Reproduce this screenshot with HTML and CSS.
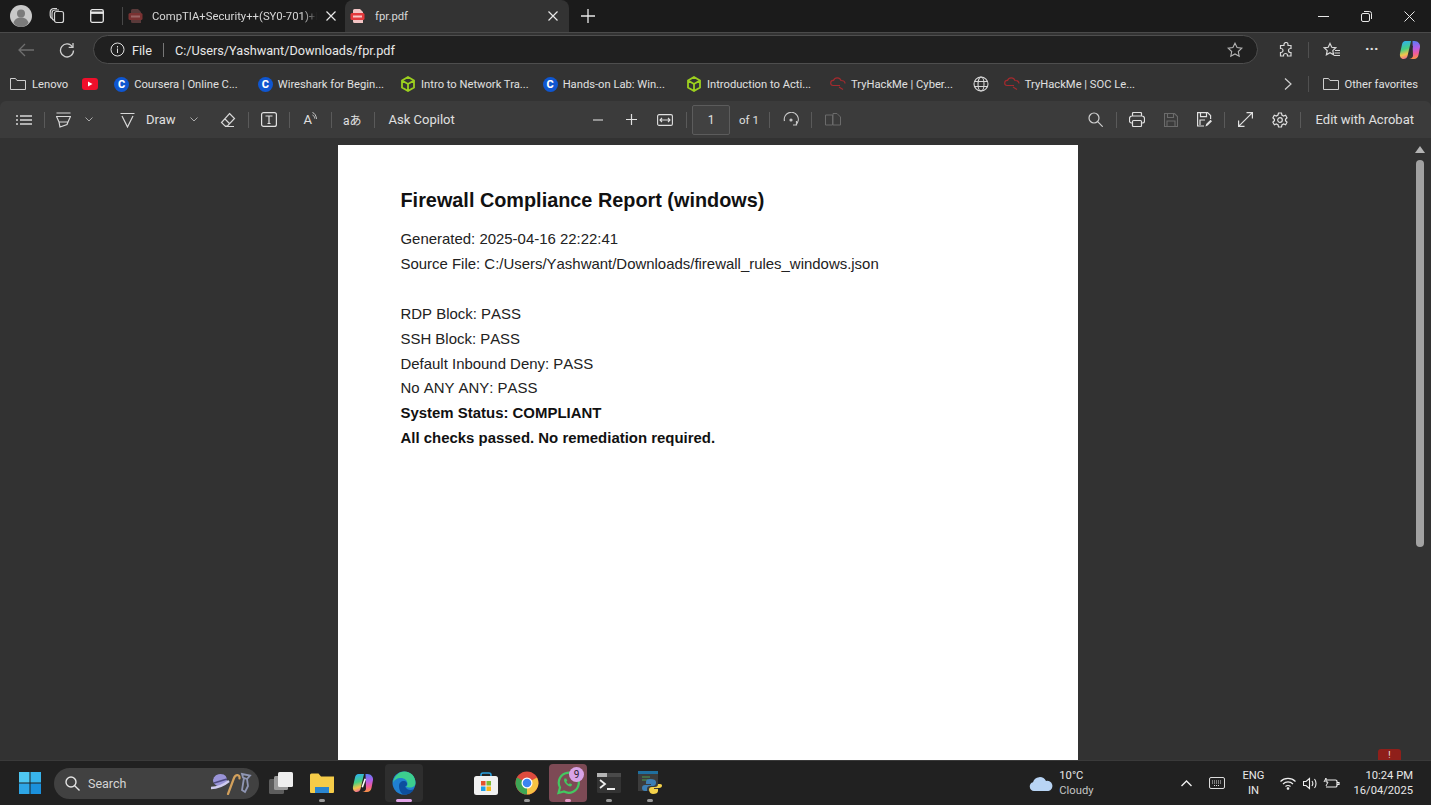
FILE: index.html
```html
<!DOCTYPE html>
<html>

<head>
    <meta charset="UTF-8">
    <meta name="viewport" content="width=device-width, initial-scale=1.0">
    <link rel="stylesheet" href="styles.css">
    <title>fpr.pdf</title>
</head>

<body>

    <!-- tab strip -->
    <div class="tabstrip">
        <div class="avatar">
            <svg width="22" height="22" viewBox="0 0 22 22">
                <circle cx="11" cy="11" r="11" fill="#c9c9c9" />
                <circle cx="11" cy="8.5" r="4" fill="#7b7b7b" />
                <path d="M3.5 18c1-4 4-5.500 7.500-5.500s6.500 1.500 7.500 5.500c-2 2.500-4.500 4-7.500 4s-5.500-1.500-7.500-4z" fill="#7b7b7b" />
            </svg>
        </div>
        <svg class="strip-icon workspaces" width="18" height="18" viewBox="0 0 18 18" fill="none" stroke="#d6d6d6" stroke-width="1.200">
            <rect x="6.500" y="4.500" width="9" height="11" rx="2" />
            <path d="M6.500 13.500c-1.500-.5-2.500-1.500-2.500-3V6c0-1.500 1-3 3-3h4" />
            <path d="M4 11.500c-1-.5-1.800-1.500-1.800-3V5.500C2.200 3 4 1.500 6 1.500h3" />
        </svg>
        <svg class="strip-icon vtabs" width="16" height="16" viewBox="0 0 16 16" fill="none" stroke="#e6e6e6" stroke-width="1.300">
            <rect x="1.700" y="1.700" width="12.600" height="12.600" rx="1.500" />
            <path d="M1.700 4.700h12.600" stroke-width="2.400" />
        </svg>
        <div class="strip-sep"></div>
        <div class="tab first">
            <svg class="pdf-icon" width="15" height="14" viewBox="0 0 15 14">
                <path d="M3 1.500A1.500 1.500 0 0 1 4.500 0H10l3 3v11H4.500A1.500 1.500 0 0 1 3 12.500z" fill="#5a3a3a" />
                <rect x="0.500" y="4" width="14" height="7" rx="1.500" fill="#7a3232" />
                <rect x="3" y="6.500" width="9" height="2" fill="#9a6464" />
            </svg>
            <span class="tab-title fade">CompTIA+Security++(SY0-701)+I</span>
            <svg class="tab-close" width="10" height="10" viewBox="0 0 10 10" stroke="#e8e8e8" stroke-width="1.200"><path d="M.5.5l9 9M9.500.5l-9 9" /></svg>
        </div>
        <div class="tab active">
            <svg class="pdf-icon" width="15" height="14" viewBox="0 0 15 14">
                <path d="M3 1.500A1.500 1.500 0 0 1 4.500 0H10l3 3v11H4.500A1.500 1.500 0 0 1 3 12.500z" fill="#f3c4c4" />
                <rect x="0.500" y="4" width="14" height="7" rx="1.500" fill="#e3393c" />
                <rect x="3" y="6.500" width="9" height="2" fill="#f8c6c6" />
            </svg>
            <span class="tab-title">fpr.pdf</span>
            <svg class="tab-close" width="10" height="10" viewBox="0 0 10 10" stroke="#e8e8e8" stroke-width="1.200"><path d="M.5.5l9 9M9.500.5l-9 9" /></svg>
        </div>
        <svg class="new-tab" width="14" height="14" viewBox="0 0 14 14" stroke="#e8e8e8" stroke-width="1.300">
            <path d="M7 0v14M0 7h14" />
        </svg>
        <div class="window-btns">
            <svg width="11" height="11" viewBox="0 0 11 11" stroke="#e8e8e8" fill="none"><path d="M0 5.500h11" /></svg>
            <svg width="11" height="11" viewBox="0 0 11 11" stroke="#e8e8e8" fill="none"><rect x="0.500" y="2.500" width="8" height="8" rx="1.500" /><path d="M3 .5h5.500a2 2 0 0 1 2 2V8" /></svg>
            <svg width="11" height="11" viewBox="0 0 11 11" stroke="#e8e8e8" fill="none"><path d="M.5.5l10 10M10.500.5l-10 10" /></svg>
        </div>
    </div>

    <!-- address row -->
    <div class="navbar">
        <svg class="nav-back" width="16" height="14" viewBox="0 0 16 14" fill="none" stroke="#6f6f6f" stroke-width="1.300">
            <path d="M16 7H1M7 1L1 7l6 6" />
        </svg>
        <svg class="nav-reload" width="16" height="16" viewBox="0 0 16 16" fill="none" stroke="#cfcfcf" stroke-width="1.300">
            <path d="M13.500 5A6.500 6.500 0 1 0 14.500 8.500" />
            <path d="M14 1v4.300H9.700" />
        </svg>
        <div class="address">
            <svg width="15" height="15" viewBox="0 0 15 15" fill="none" stroke="#e0e0e0">
                <circle cx="7.500" cy="7.500" r="6.500" />
                <path d="M7.500 6.500v4.500M7.500 4v1.500" />
            </svg>
            <span class="addr-file">File</span>
            <span class="addr-sep"></span>
            <span class="addr-url">C:/Users/Yashwant/Downloads/fpr.pdf</span>
            <svg class="addr-star" width="16" height="16" viewBox="0 0 16 16" fill="none" stroke="#b5b5b5" stroke-width="1.100">
                <path d="M8 1.200l2.100 4.400 4.700.6-3.500 3.300.9 4.800L8 11.900l-4.200 2.400.9-4.800L1.200 6.200l4.700-.6z" />
            </svg>
        </div>
        <div class="nav-tools">
            <svg class="tool-ext" width="16" height="16" viewBox="0 0 16 16" fill="none" stroke="#d8d8d8" stroke-width="1.200">
                <path d="M6 2.500a2 2 0 0 1 4 0V3.500h3v3h-.5a2 2 0 0 0 0 4h.5V14h-3.500v-.5a2 2 0 0 0-4 0v.5H2.500v-3.500H3a2 2 0 0 0 0-4h-.5V3.500H6z" />
            </svg>
            <span class="tool-sep"></span>
            <svg class="tool-favs" width="18" height="16" viewBox="0 0 18 16" fill="none" stroke="#d8d8d8" stroke-width="1.200">
                <path d="M7 1.500l1.800 3.800 4 .5-3 2.800.8 4.200L7 10.800l-3.600 2 .8-4.200-3-2.800 4-.5zM12 8.500h5M11.500 11h5.500M11 13.500h6" />
            </svg>
            <span class="tool-dots">···</span>
            <svg class="tool-copilot" width="22" height="22" viewBox="0 0 22 22">
                <defs>
                    <linearGradient id="cpa" x1="0.300" y1="0" x2="0.500" y2="1">
                        <stop offset="0" stop-color="#2fb0f2" />
                        <stop offset="0.450" stop-color="#45cf82" />
                        <stop offset="0.750" stop-color="#f3c44a" />
                        <stop offset="1" stop-color="#f0649a" />
                    </linearGradient>
                    <linearGradient id="cpb" x1="0.500" y1="0" x2="0.600" y2="1">
                        <stop offset="0" stop-color="#5a7cf6" />
                        <stop offset="0.400" stop-color="#b45ee6" />
                        <stop offset="0.700" stop-color="#f25c98" />
                        <stop offset="1" stop-color="#f8983c" />
                    </linearGradient>
                </defs>
                <path d="M6.500 2H12L8.500 17c-.5 2-2 3-4 3C2 20 .5 17.500 1 14.500L3 5.500C3.400 3.300 4.700 2 6.500 2z" fill="url(#cpa)" />
                <path d="M13.500 2h2c3.500 0 6 3 5.500 6l-1.500 8c-.5 2.500-2.300 4-4.500 4H10c2 0 3.500-1 4-3z" fill="url(#cpb)" />
                <path d="M12.500 6.500l1.500.5-3 8.500-1.500-.5z" fill="#2c2c34" />
            </svg>
        </div>
    </div>

    <!-- favorites -->
    <div class="favbar">
        <div class="fav">
            <svg width="16" height="14" viewBox="0 0 16 14" fill="none" stroke="#cfcfcf"><path d="M.5 12.500V1.500h5l1.500 2h8.500v9z" /></svg>
            <span class="fav-lenovo">Lenovo</span>
        </div>
        <div class="fav m14">
            <svg width="16" height="12" viewBox="0 0 16 12"><rect width="16" height="12" rx="3" fill="#f00f2b" /><path d="M6 3.500l4.500 2.500L6 8.500z" fill="#fff" /></svg>
        </div>
        <div class="fav m16"><span class="coursera">C</span><span>Coursera | Online C...</span></div>
        <div class="fav m20"><span class="coursera">C</span><span>Wireshark for Begin...</span></div>
        <div class="fav m16">
            <svg width="16" height="16" viewBox="0 0 16 16" fill="none" stroke="#9ccf1f" stroke-width="1.800"><path d="M8 1l6 3.500v7L8 15l-6-3.500v-7zM2 4.500L8 8l6-3.500M8 8v7" /></svg>
            <span>Intro to Network Tra...</span>
        </div>
        <div class="fav m14"><span class="coursera">C</span><span>Hands-on Lab: Win...</span></div>
        <div class="fav m21">
            <svg width="16" height="16" viewBox="0 0 16 16" fill="none" stroke="#9ccf1f" stroke-width="1.800"><path d="M8 1l6 3.500v7L8 15l-6-3.500v-7zM2 4.500L8 8l6-3.500M8 8v7" /></svg>
            <span>Introduction to Acti...</span>
        </div>
        <div class="fav m19">
            <svg width="16" height="14" viewBox="0 0 16 14" fill="none" stroke="#a42a2e" stroke-width="1.200"><path d="M3 8.500a2.500 2.500 0 0 1 .5-5 4 4 0 0 1 7.500 0c2.500 0 4 1.500 4 3M3 8.500h7M9 10l4 2.500" /></svg>
            <span>TryHackMe | Cyber...</span>
        </div>
        <div class="fav m20">
            <svg width="16" height="16" viewBox="0 0 16 16" fill="none" stroke="#d8d8d8" stroke-width="1.100"><circle cx="8" cy="8" r="7" /><ellipse cx="8" cy="8" rx="3" ry="7" /><path d="M1.500 5.500h13M1.500 10.500h13" /></svg>
        </div>
        <div class="fav m15">
            <svg width="16" height="14" viewBox="0 0 16 14" fill="none" stroke="#a42a2e" stroke-width="1.200"><path d="M3 8.500a2.500 2.500 0 0 1 .5-5 4 4 0 0 1 7.500 0c2.500 0 4 1.500 4 3M3 8.500h7M9 10l4 2.500" /></svg>
            <span>TryHackMe | SOC Le...</span>
        </div>
        <div class="fav-end">
            <svg width="8" height="12" viewBox="0 0 8 12" fill="none" stroke="#d0d0d0" stroke-width="1.200"><path d="M1 .5L7 6l-6 5.500" /></svg>
            <span class="tool-sep"></span>
            <div class="fav">
                <svg width="16" height="14" viewBox="0 0 16 14" fill="none" stroke="#cfcfcf"><path d="M.5 12.500V1.500h5l1.500 2h8.500v9z" /></svg>
                <span>Other favorites</span>
            </div>
        </div>
    </div>

    <!-- pdf toolbar -->
    <div class="pdfbar">
        <div class="pdf-left">
            <svg class="ico-contents" width="16" height="12" viewBox="0 0 16 12" stroke="#d8d8d8" stroke-width="1.300"><path d="M0 2h2M4 2h12M0 6h2M4 6h12M0 10h2M4 10h12" /></svg>
            <span class="bar-sep"></span>
            <svg class="ico-hl" width="15" height="16" viewBox="0 0 15 16" fill="none" stroke="#d8d8d8" stroke-width="1.200"><path d="M.5 1h14M.5 4.500h14L12 10H3zM3 10l1 5 7-2.500L12 10" /></svg>
            <svg class="chev" width="8" height="5" viewBox="0 0 8 5" fill="none" stroke="#aaa"><path d="M.5.5L4 4 7.500.5" /></svg>
            <svg class="ico-draw" width="15" height="16" viewBox="0 0 15 16" fill="none" stroke="#d8d8d8" stroke-width="1.200"><path d="M.5 1.500h14M2 4l5.500 11L13 4" /></svg>
            <span class="bar-text draw">Draw</span>
            <svg class="chev chev-draw" width="8" height="5" viewBox="0 0 8 5" fill="none" stroke="#aaa"><path d="M.5.5L4 4 7.500.5" /></svg>
            <svg class="ico-erase" width="16" height="16" viewBox="0 0 16 16" fill="none" stroke="#d8d8d8" stroke-width="1.200"><path d="M9.500 1.500l5 5-7 7.500H5L1.500 10.500zM4.500 6.500l5 5M5 14.500h9" /></svg>
            <span class="bar-sep"></span>
            <svg class="ico-text" width="16" height="15" viewBox="0 0 16 15" fill="none" stroke="#e0e0e0" stroke-width="1.200"><rect x=".6" y=".6" width="14.800" height="13.800" rx="2" /><path d="M4.500 4h7M8 4v7.500M6.500 11.500h3" /></svg>
            <span class="bar-sep"></span>
            <span class="bar-text read">A</span>
            <svg class="ico-waves" width="6" height="8" viewBox="0 0 6 8" fill="none" stroke="#c8c8c8"><path d="M.5.500C3 1.500 4 3.500 4.500 7M.5 3c1.500.5 2 2 2.200 3.500" /></svg>
            <span class="bar-sep"></span>
            <span class="bar-text trans">aあ</span>
            <span class="bar-sep"></span>
            <span class="bar-text copilot">Ask Copilot</span>
        </div>
        <div class="pdf-center">
            <svg width="10" height="10" viewBox="0 0 10 10" stroke="#cfcfcf" stroke-width="1.200"><path d="M0 5h10" /></svg>
            <svg class="ico-plus" width="11" height="11" viewBox="0 0 11 11" stroke="#e0e0e0" stroke-width="1.200"><path d="M0 5.500h11M5.500 0v11" /></svg>
            <svg class="ico-fit" width="16" height="12" viewBox="0 0 16 12" fill="none" stroke="#e0e0e0" stroke-width="1.100"><rect x=".6" y=".6" width="14.800" height="10.800" rx="1.500" /><path d="M3 6h10M5 4L3 6l2 2M11 4l2 2-2 2" /></svg>
            <span class="bar-sep"></span>
            <span class="page-box">1</span>
            <span class="bar-text page-of">of 1</span>
            <span class="bar-sep"></span>
            <svg class="ico-rotate" width="16" height="16" viewBox="0 0 16 16" fill="none" stroke="#c8c8c8" stroke-width="1.200"><path d="M1.500 9A7 7 0 1 1 13 12.500M13.500 9v4H10" /><circle cx="8" cy="8" r="1" fill="#c8c8c8" /></svg>
            <span class="bar-sep"></span>
            <svg class="ico-spread" width="16" height="13" viewBox="0 0 16 13" fill="none" stroke="#6b6b6b"><path d="M.5 2h7v10h-7zM8 12V.5l4 0 3.500 3.500V12H8" /></svg>
        </div>
        <div class="pdf-right">
            <svg width="15" height="15" viewBox="0 0 15 15" fill="none" stroke="#d0d0d0" stroke-width="1.200"><circle cx="6" cy="6" r="5" /><path d="M9.700 9.700l5 5" /></svg>
            <span class="bar-sep"></span>
            <svg class="ico-print" width="16" height="15" viewBox="0 0 16 15" fill="none" stroke="#e0e0e0" stroke-width="1.200"><path d="M3.500 4V1.500a1 1 0 0 1 1-1h7a1 1 0 0 1 1 1V4M3.500 11h-1a2 2 0 0 1-2-2V6.500a2.500 2.500 0 0 1 2.500-2.500h10a2.500 2.500 0 0 1 2.500 2.500V9a2 2 0 0 1-2 2h-1" /><rect x="3.500" y="8.500" width="9" height="6" rx="1" /></svg>
            <svg class="ico-save" width="14" height="14" viewBox="0 0 14 14" fill="none" stroke="#6b6b6b" stroke-width="1.100"><path d="M.5.500h10l3 3v10H.5zM3.500.5v4h6v-4M3 13.500V8h8v5.500" /></svg>
            <svg class="ico-saveas" width="15" height="15" viewBox="0 0 15 15" fill="none" stroke="#e0e0e0" stroke-width="1.200"><path d="M7 14H.6V.6h10l3 3V7M3.500.6v4h6v-4M3 13V8h5" /><path d="M8.500 14.500l.7-2.500 4.300-4.300 1.500 1.500-4.300 4.300z" fill="#e0e0e0" stroke="none" /></svg>
            <span class="bar-sep"></span>
            <svg class="ico-expand" width="15" height="15" viewBox="0 0 15 15" fill="none" stroke="#e0e0e0" stroke-width="1.200"><path d="M.6 14.400L14.400.6M.6 8.500v5.900h5.900M8.500.6h5.900v5.900" /></svg>
            <svg class="ico-gear" width="16" height="16" viewBox="0 0 16 16" fill="none" stroke="#e0e0e0" stroke-width="1.200"><circle cx="8" cy="8" r="2.300" /><path d="M6.500 1h3l.4 2 1.700 1 2-.7 1.400 2.500-1.500 1.400v1.600l1.500 1.400-1.400 2.500-2-.7-1.700 1-.4 2h-3l-.4-2-1.700-1-2 .7L.9 10.200l1.500-1.400V7.200L.9 5.800l1.400-2.500 2 .7 1.700-1z" /></svg>
            <span class="bar-sep"></span>
            <span class="bar-text acrobat">Edit with Acrobat</span>
        </div>
    </div>

    <!-- document area -->
    <div class="viewer">
        <div class="page">
            <h1>Firewall Compliance Report (windows)</h1>
            <p>Generated: 2025-04-16 22:22:41</p>
            <p class="gap-after">Source File: C:/Users/Yashwant/Downloads/firewall_rules_windows.json</p>
            <p>RDP Block: PASS</p>
            <p>SSH Block: PASS</p>
            <p>Default Inbound Deny: PASS</p>
            <p>No ANY ANY: PASS</p>
            <p class="strong">System Status: COMPLIANT</p>
            <p class="strong">All checks passed. No remediation required.</p>
        </div>
        <div class="scrollbar">
            <span class="sb-up"></span>
            <span class="sb-thumb"></span>
        </div>
        <div class="red-badge">!</div>
    </div>

    <!-- windows taskbar -->
    <div class="taskbar">
        <svg class="win-logo" width="22" height="22" viewBox="0 0 22 22">
            <rect width="10.500" height="10.500" fill="#4fc8f2" />
            <rect x="11.500" width="10.500" height="10.500" fill="#38b4ec" />
            <rect y="11.500" width="10.500" height="10.500" fill="#2ea6e6" />
            <rect x="11.500" y="11.500" width="10.500" height="10.500" fill="#1b90dc" />
        </svg>
        <div class="search">
            <svg width="15" height="15" viewBox="0 0 15 15" fill="none" stroke="#e4e4e4" stroke-width="1.400"><circle cx="6" cy="6" r="5" /><path d="M9.700 9.700l4.800 4.800" /></svg>
            <span>Search</span>
            <svg class="search-art" width="42" height="24" viewBox="0 0 42 24" fill="none">
                <ellipse cx="10" cy="9" rx="7" ry="6" fill="#9a94d8" transform="rotate(-15 10 9)" />
                <path d="M1 17c6 0 13-3 18-7" stroke="#cfcbee" stroke-width="2.400" />
                <path d="M4 12l13-4" stroke="#4d4a80" stroke-width="1.500" />
                <path d="M18 23l6-16c1.500-4 6-4 5.500.5" stroke="#d2a05c" stroke-width="2.200" stroke-linecap="round" />
                <path d="M32 3l8 1.500-3 3.500-4-1.500zM34 7l-1 6-1 6 3 2 3-6-1-7" stroke="#8f96b3" stroke-width="1.800" />
            </svg>
        </div>
        <div class="task-icons">
            <div class="task-item">
                <svg width="24" height="22" viewBox="0 0 24 22"><rect y="7" width="15" height="15" rx="1.500" fill="#5d5d5d" /><rect x="5" y="4" width="14" height="14" rx="1.500" fill="#9a9a9a" /><rect x="9" width="15" height="15" rx="1.500" fill="#eeeeee" /></svg>
            </div>
            <div class="task-item open">
                <svg width="24" height="20" viewBox="0 0 24 20"><path d="M0 2a1.500 1.500 0 0 1 1.500-1.500h7l2.500 3h13V19a1 1 0 0 1-1 1H1a1 1 0 0 1-1-1z" fill="#f6cc48" /><rect x="5" y="14" width="14" height="6" fill="#2a86d0" /></svg>
            </div>
            <div class="task-item">
                <svg width="22" height="22" viewBox="0 0 22 22">
                    <path d="M6.500 2H12L8.500 17c-.5 2-2 3-4 3C2 20 .5 17.500 1 14.500L3 5.500C3.400 3.300 4.700 2 6.500 2z" fill="url(#cpa)" />
                    <path d="M13.500 2h2c3.500 0 6 3 5.500 6l-1.500 8c-.5 2.500-2.300 4-4.500 4H10c2 0 3.500-1 4-3z" fill="url(#cpb)" />
                    <path d="M12.500 6.500l1.500.5-3 8.500-1.500-.5z" fill="#fff" />
                </svg>
            </div>
            <div class="task-item running">
                <svg width="24" height="24" viewBox="0 0 24 24">
                    <circle cx="12" cy="12" r="11.500" fill="#1f7fd0" />
                    <path d="M1 12C2 5 7 .5 12.500.5 19 .5 23.500 5.500 23.500 12c0 3-2.500 4.500-5.500 4.500-2 0-3.500-.5-4-1 1-.5 1.500-1.500 1.500-2.500C15.500 9 12 7 9 7c-4 0-7 2-8 5z" fill="#3ccf8e" />
                    <path d="M7 15c0-3 2-5 5-5 2 0 3 1.500 3 3s-1 2.500-2 2.500c2 4 6 4 9 2.500-2 4-6 6-10 5.500C9 23 7 19 7 15z" fill="#0d4f9e" />
                </svg>
            </div>
            <div class="task-spacer"></div>
            <div class="task-item">
                <svg width="24" height="23" viewBox="0 0 24 23"><path d="M7 5V3a2 2 0 0 1 2-2h6a2 2 0 0 1 2 2v2" fill="none" stroke="#29a0e0" stroke-width="1.500" /><rect y="4" width="24" height="19" rx="2.500" fill="#f1f1f1" /><rect x="7" y="9" width="4.500" height="4.500" fill="#e5512d" /><rect x="12.500" y="9" width="4.500" height="4.500" fill="#7cbb35" /><rect x="7" y="14.500" width="4.500" height="4.500" fill="#1f9fe8" /><rect x="12.500" y="14.500" width="4.500" height="4.500" fill="#f7b818" /></svg>
            </div>
            <div class="task-item open">
                <svg width="24" height="24" viewBox="0 0 24 24">
                    <circle cx="12" cy="12" r="11.500" fill="#dd4b3e" />
                    <path d="M12 12L22 6.500A11.500 11.500 0 0 1 12 23.500z" fill="#f6c243" />
                    <path d="M12 12L12 23.500A11.500 11.500 0 0 1 2 6.500z" fill="#3ea655" />
                    <circle cx="12" cy="12" r="5.500" fill="#fff" />
                    <circle cx="12" cy="12" r="4.300" fill="#3b84f2" />
                </svg>
            </div>
            <div class="task-item wa open-pink">
                <svg width="24" height="24" viewBox="0 0 24 24" fill="none" stroke="#43c860" stroke-width="2.200">
                    <path d="M2.500 22l1.500-5.500A10 10 0 1 1 8 20.500z" />
                    <path d="M8.500 7.500c-1 1.500-.5 3.500 1.500 5.500s4 3 5.500 2l.5-1.800-2.200-1-1 1c-1-.5-2-1.500-2.500-2.500l1-1-1-2.200z" fill="#43c860" stroke="none" />
                </svg>
                <span class="wa-badge">9</span>
            </div>
            <div class="task-item open">
                <svg width="24" height="20" viewBox="0 0 24 20"><rect width="24" height="20" rx="1.500" fill="#333" /><rect width="24" height="4" fill="#4a4a4a" /><rect width="10" height="4" fill="#b5b5b5" /><path d="M3 7l5 4-5 4" fill="none" stroke="#eee" stroke-width="1.800" /><path d="M10 16h8" stroke="#eee" stroke-width="2" /></svg>
            </div>
            <div class="task-item open">
                <svg width="24" height="24" viewBox="0 0 24 24">
                    <rect y="0" width="20" height="20" fill="#3c3c3c" />
                    <rect y="0" width="20" height="3" fill="#1f6f9e" />
                    <path d="M4 6h8M4 9h6" stroke="#4f9e4f" />
                    <path d="M12 8c-3 0-4 1-4 3v2h5v1H7c-2 0-3 1-3 3s1 3 3 3h2v-2c0-2 1-3 3-3h3c1.500 0 3-1 3-3v-1c0-2-2-3-6-3z" fill="#3d7fb5" />
                    <path d="M20 13c0 2-1 3-3 3h-3c-2 0-3 1-3 2.500S12 23 15 23s5-1 5-3v-2h-4v-1h5c2 0 3-1 3-2.500S23 13 20 13z" fill="#f5d24a" />
                </svg>
            </div>
        </div>
        <div class="tray">
            <div class="weather">
                <svg width="24" height="15" viewBox="0 0 24 15"><path d="M5 15a4.500 4.500 0 0 1-1-8.800A7 7 0 0 1 17 5a5 5 0 0 1 2.500 10z" fill="#b8d4f4" /></svg>
                <div class="weather-text">
                    <span class="temp">10°C</span>
                    <span class="sky">Cloudy</span>
                </div>
            </div>
            <svg class="tray-chevron" width="11" height="7" viewBox="0 0 11 7" fill="none" stroke="#eee" stroke-width="1.400"><path d="M.5 6l5-5 5 5" /></svg>
            <svg class="tray-keys" width="16" height="12" viewBox="0 0 16 12" fill="none" stroke="#ddd"><rect x=".5" y=".5" width="15" height="11" rx="1.500" /><path d="M3 4h10M3 6h10M5 8.500h6" stroke-dasharray="1 1" /></svg>
            <div class="lang"><span>ENG</span><span>IN</span></div>
            <div class="tray-status">
                <svg width="16" height="13" viewBox="0 0 16 13" fill="none" stroke="#eee" stroke-width="1.100"><path d="M.5 4.500a10.500 10.500 0 0 1 15 0M3 7a7 7 0 0 1 10 0M5.500 9.500a3.500 3.500 0 0 1 5 0" /><circle cx="8" cy="11.500" r=".8" fill="#eee" /></svg>
                <svg class="tray-vol" width="15" height="13" viewBox="0 0 15 13" fill="none" stroke="#eee" stroke-width="1.100"><path d="M.5 4.500h2.500L6.500 1.500v10L3 8.500H.5zM9 4c1 1.500 1 3.500 0 5M11.500 2c2 2.500 2 6.500 0 9" /></svg>
                <svg class="tray-batt" width="17" height="13" viewBox="0 0 17 13" fill="none" stroke="#eee" stroke-width="1.200"><path d="M3 3h9.500a1.500 1.500 0 0 1 1.500 1.500v4a1.500 1.500 0 0 1-1.500 1.500H3M14 5.500h2v2h-2" /><path d="M1 5l2-4v4h2L3 9" stroke-width="1" /></svg>
            </div>
            <div class="clock"><span>10:24 PM</span><span>16/04/2025</span></div>
        </div>
    </div>

</body>

</html>
```

FILE: styles.css
```css
* {
    box-sizing: border-box;
}

html,
body {
    margin: 0;
    padding: 0;
    height: 100%;
    overflow: hidden;
}

body {
    width: 1431px;
    height: 805px;
    display: flex;
    flex-direction: column;
    background-color: #333;
    font-family: Roboto, "Noto Sans", sans-serif;
    color: #e4e4e4;
}

svg {
    flex: none;
    display: block;
}

/* tab strip */
.tabstrip {
    height: 32px;
    flex: none;
    display: flex;
    align-items: center;
    background-color: #1b1b1b;
    padding-left: 10px;
}

.avatar {
    width: 22px;
    height: 22px;
}

.workspaces {
    margin-left: 16px;
}

.vtabs {
    margin-left: 23px;
}

.strip-sep {
    width: 1px;
    height: 18px;
    background-color: #484848;
    margin-left: 17px;
}

.tab {
    width: 222px;
    height: 32px;
    display: flex;
    align-items: center;
    padding-left: 5px;
    position: relative;
    font-size: 11.300px;
    color: #d8d8d8;
}

.tab.active {
    width: 224px;
    background-color: #333;
    border-radius: 8px 8px 0 0;
}

.tab-title {
    margin-left: 9px;
    width: 172px;
    white-space: nowrap;
}

.tab-title.fade {
    -webkit-mask-image: linear-gradient(to right, #000 88%, transparent 96%);
    mask-image: linear-gradient(to right, #000 88%, transparent 96%);
}

.tab.active .tab-title {
    margin-left: 10px;
}

.tab-close {
    position: absolute;
    right: 11px;
    top: 11px;
}

.tab.first .tab-close {
    right: 9px;
}

.new-tab {
    margin-left: 12px;
}

.window-btns {
    margin-left: auto;
    display: flex;
    gap: 32px;
    padding-right: 16px;
}

/* address row */
.navbar {
    height: 34px;
    flex: none;
    display: flex;
    align-items: center;
    background-color: #333;
    border-top: 1px solid #4a4a4a;
    padding-left: 18px;
}

.nav-reload {
    margin-left: 25px;
}

.address {
    width: 1165px;
    height: 29px;
    margin-left: 18px;
    display: flex;
    align-items: center;
    background-color: #202020;
    border: 1px solid #4e4e4e;
    border-radius: 15px;
    padding-left: 16px;
    font-size: 12.700px;
}

.addr-file {
    margin-left: 7px;
    padding-top: 1px;
    color: #e8e8e8;
}

.addr-sep {
    width: 1px;
    height: 14px;
    background-color: #777;
    margin-left: 11px;
}

.addr-url {
    margin-left: 11px;
    padding-top: 1px;
    color: #e8e8e8;
}

.addr-star {
    margin-left: auto;
    margin-right: 14px;
}

.nav-tools {
    display: flex;
    align-items: center;
}

.tool-ext {
    margin-left: 20px;
}

.tool-sep {
    width: 1px;
    height: 16px;
    background-color: #505050;
    margin-left: 14px;
}

.tool-favs {
    margin-left: 14px;
}

.tool-dots {
    margin-left: 24px;
    font-size: 15px;
    font-weight: 700;
    line-height: 1;
    color: #e0e0e0;
}

.tool-copilot {
    margin-left: 20px;
}

/* favorites */
.favbar {
    height: 35px;
    flex: none;
    display: flex;
    align-items: center;
    background-color: #333;
    padding-top: 1px;
    padding-left: 10px;
    font-size: 11.200px;
    color: #e0e0e0;
}

.fav {
    display: flex;
    align-items: center;
    gap: 5px;
    white-space: nowrap;
}

.fav-lenovo {
    margin-left: 1px;
}

.m14 {
    margin-left: 14px;
}

.m15 {
    margin-left: 15px;
}

.m16 {
    margin-left: 16px;
}

.m19 {
    margin-left: 19px;
}

.m20 {
    margin-left: 20px;
}

.m21 {
    margin-left: 21px;
}

.coursera {
    width: 15px;
    height: 15px;
    border-radius: 50%;
    background-color: #0f56d0;
    color: #fff;
    font-size: 11px;
    font-weight: 800;
    text-align: center;
    line-height: 15px;
}

.fav-end {
    margin-left: auto;
    display: flex;
    align-items: center;
    padding-right: 13px;
}

.fav-end .fav {
    margin-left: 14px;
}

.fav-end .tool-sep {
    margin-left: 16px;
}

/* pdf toolbar */
.pdfbar {
    height: 37px;
    flex: none;
    display: flex;
    align-items: center;
    position: relative;
    background-color: #3b3b3b;
    border-radius: 6px 6px 0 0;
    padding-left: 16px;
    font-size: 13px;
    color: #e0e0e0;
}

.pdf-left,
.pdf-center,
.pdf-right {
    display: flex;
    align-items: center;
}

.bar-sep {
    width: 1px;
    height: 16px;
    background-color: #5a5a5a;
}

.bar-text {
    white-space: nowrap;
}

.pdf-left .bar-sep:nth-of-type(1) {
    margin-left: 12px;
}

.ico-hl {
    margin-left: 11px;
}

.chev {
    margin-left: 14px;
}

.ico-draw {
    margin-left: 27px;
}

.draw {
    margin-left: 11px;
}

.chev-draw {
    margin-left: 14px;
}

.ico-erase {
    margin-left: 22px;
}

.ico-erase + .bar-sep {
    margin-left: 12px;
}

.ico-text {
    margin-left: 12px;
}

.ico-text + .bar-sep {
    margin-left: 12px;
}

.read {
    margin-left: 14px;
}

.ico-waves {
    margin-bottom: 8px;
}

.ico-waves + .bar-sep {
    margin-left: 13px;
}

.trans {
    margin-left: 11px;
    font-family: Roboto, "Noto Sans CJK JP", sans-serif;
    font-size: 12px;
}

.trans + .bar-sep {
    margin-left: 12px;
}

.copilot {
    margin-left: 14px;
}

.pdf-center {
    position: absolute;
    left: 593px;
}

.ico-plus {
    margin-left: 23px;
}

.ico-fit {
    margin-left: 20px;
}

.ico-fit + .bar-sep {
    margin-left: 13px;
}

.page-box {
    width: 38px;
    height: 30px;
    margin-left: 5px;
    border: 1px solid #5c5c5c;
    background-color: #414141;
    border-radius: 2px;
    text-align: center;
    line-height: 28px;
    font-size: 12px;
}

.page-of {
    margin-left: 9px;
    font-size: 11.500px;
}

.page-of + .bar-sep {
    margin-left: 10px;
}

.ico-rotate {
    margin-left: 13px;
}

.ico-rotate + .bar-sep {
    margin-left: 12px;
}

.ico-spread {
    margin-left: 13px;
}

.pdf-right {
    margin-left: auto;
    padding-right: 17px;
}

.pdf-right .bar-sep:nth-of-type(1) {
    margin-left: 13px;
}

.ico-print {
    margin-left: 12px;
}

.ico-save {
    margin-left: 19px;
}

.ico-saveas {
    margin-left: 19px;
}

.ico-saveas + .bar-sep {
    margin-left: 12px;
}

.ico-expand {
    margin-left: 13px;
}

.ico-gear {
    margin-left: 19px;
}

.ico-gear + .bar-sep {
    margin-left: 12px;
}

.acrobat {
    margin-left: 15px;
}

/* document area */
.viewer {
    flex: 1;
    min-height: 0;
    position: relative;
    display: flex;
    justify-content: center;
    background-color: #323232;
    padding-top: 7px;
    overflow: hidden;
}

.page {
    width: 740px;
    background-color: #fff;
    padding: 43px 62.500px 0;
    margin-right: 15px;
    color: #222;
    font-family: "Liberation Sans", Arial, sans-serif;
    font-size: 14.940px;
    font-kerning: none;
}

.page h1 {
    margin: 0 0 15px;
    font-size: 19.850px;
    line-height: 24px;
    font-weight: 700;
    color: #111;
}

.page p {
    margin: 0;
    line-height: 24.900px;
}

.page .gap-after {
    margin-bottom: 24.900px;
}

.page .strong {
    font-weight: 700;
    color: #111;
}

.scrollbar {
    position: absolute;
    top: 0;
    right: 0;
    width: 22px;
    height: 100%;
}

.sb-up {
    position: absolute;
    top: 8px;
    left: 6px;
    width: 0;
    height: 0;
    border-left: 5px solid transparent;
    border-right: 5px solid transparent;
    border-bottom: 7px solid #b4b4b4;
}

.sb-thumb {
    position: absolute;
    top: 22px;
    left: 7px;
    width: 8px;
    height: 387px;
    border-radius: 4px;
    background-color: #a2a2a2;
}

.red-badge {
    position: absolute;
    bottom: 0;
    left: 1378px;
    width: 23px;
    height: 11px;
    background-color: #8f1f1a;
    border-radius: 3px 3px 0 0;
    color: #eee;
    font-size: 9px;
    line-height: 12px;
    text-align: center;
}

/* windows taskbar */
.taskbar {
    height: 45px;
    flex: none;
    display: flex;
    align-items: center;
    background-color: #212121;
    border-top: 1px solid #3a3a3a;
    padding-left: 19px;
}

.search {
    width: 205px;
    height: 31px;
    margin-left: 13px;
    display: flex;
    align-items: center;
    border-radius: 16px;
    background-color: #414141;
    padding-left: 11px;
    font-size: 12.500px;
    color: #d4d4d4;
}

.search span {
    margin-left: 8px;
}

.search-art {
    margin-left: auto;
    margin-right: 7px;
}

.task-icons {
    display: flex;
    align-items: center;
    margin-left: 3px;
}

.task-item {
    width: 38px;
    height: 38px;
    margin-right: 3px;
    display: flex;
    align-items: center;
    justify-content: center;
    position: relative;
    border-radius: 4px;
}

.task-spacer {
    width: 41px;
}

.task-item.open::after,
.task-item.running::after,
.task-item.open-pink::after {
    content: "";
    position: absolute;
    bottom: 0;
    left: 16px;
    width: 6px;
    height: 3px;
    border-radius: 2px;
    background-color: #9a9a9a;
}

.task-item.running {
    background-color: #2e2e2e;
}

.task-item.running::after {
    left: 11px;
    width: 16px;
    background-color: #e2a5e8;
}

.wa {
    background-color: #7d4a55;
}

.task-item.open-pink::after {
    background-color: #e59ac8;
}

.wa-badge {
    position: absolute;
    top: 3px;
    right: 3px;
    width: 15px;
    height: 15px;
    border-radius: 50%;
    background-color: #d9a4e8;
    color: #2b1e30;
    font-size: 10px;
    line-height: 15px;
    text-align: center;
}

.tray {
    margin-left: auto;
    display: flex;
    align-items: center;
    padding-right: 18px;
    font-size: 11.200px;
    color: #e8e8e8;
}

.weather {
    display: flex;
    align-items: center;
    gap: 6px;
}

.weather-text {
    display: flex;
    flex-direction: column;
    line-height: 15px;
}

.sky {
    color: #c4c4c4;
}

.tray-chevron {
    margin-left: 88px;
}

.tray-keys {
    margin-left: 17px;
}

.lang {
    margin-left: 17px;
    display: flex;
    flex-direction: column;
    align-items: center;
    line-height: 15px;
}

.tray-status {
    margin-left: 16px;
    display: flex;
    align-items: center;
}

.tray-vol {
    margin-left: 7px;
}

.tray-batt {
    margin-left: 5px;
}

.clock {
    margin-left: 13px;
    display: flex;
    flex-direction: column;
    align-items: flex-end;
    line-height: 15px;
}
```
